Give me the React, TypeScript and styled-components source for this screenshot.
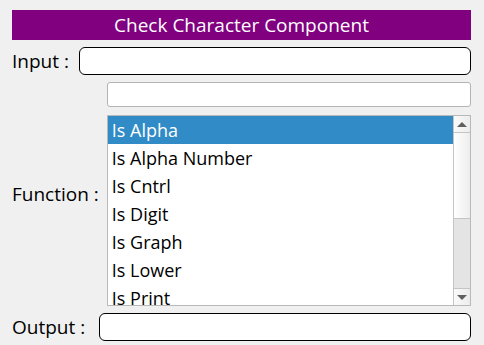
import React from 'react';
import styled, { createGlobalStyle } from 'styled-components';

const GlobalStyle = createGlobalStyle`
  html, body {
    margin: 0;
    background: #f0f0f0;
  }
  body {
    font-family: 'Open Sans', 'Noto Sans', sans-serif;
    color: #000;
  }
`;

const Page = styled.div`
  display: flex;
  flex-direction: column;
  gap: 7px;
  padding: 10px 13px 0 12px;
`;

const TitleBar = styled.div`
  height: 30px;
  background: #800080;
  color: #fff;
  font-size: 19px;
  line-height: 30px;
  text-align: center;
`;

const Row = styled.div<{ $gap: number }>`
  display: flex;
  align-items: center;
  gap: ${(p) => p.$gap}px;
`;

const Label = styled.span`
  font-size: 19px;
  white-space: nowrap;
`;

const Field = styled.input`
  flex: 1;
  height: 28px;
  box-sizing: border-box;
  border: 1px solid #000;
  border-radius: 6px;
  background: #fff;
  outline: none;
`;

const Column = styled.div`
  flex: 1;
  display: flex;
  flex-direction: column;
  gap: 8px;
`;

const Search = styled.input`
  height: 25px;
  box-sizing: border-box;
  border: 1px solid #b4b4b4;
  border-radius: 3px;
  background: #fff;
  outline: none;
`;

const ListBox = styled.div`
  height: 191px;
  box-sizing: border-box;
  border: 1px solid #b9b9b9;
  background: #fff;
  display: flex;
`;

const Items = styled.div`
  flex: 1;
  overflow: hidden;
`;

const Item = styled.div<{ $selected?: boolean }>`
  height: 28px;
  line-height: 29px;
  padding-left: 4px;
  font-size: 18px;
  white-space: nowrap;
  background: ${(p) => (p.$selected ? '#308bc6' : 'transparent')};
  color: ${(p) => (p.$selected ? '#fff' : '#000')};
`;

const ScrollBar = styled.div`
  width: 16px;
  border-left: 1px solid #c4c4c4;
  display: flex;
  flex-direction: column;
`;

const Arrow = styled.div<{ $down?: boolean }>`
  height: 16px;
  display: flex;
  align-items: center;
  justify-content: center;
  background: linear-gradient(to right, #fafafa, #ececec);
  border-top: ${(p) => (p.$down ? '1px solid #c4c4c4' : 'none')};
  border-bottom: ${(p) => (p.$down ? 'none' : '1px solid #c4c4c4')};
  &::after {
    content: '';
    border-left: 5px solid transparent;
    border-right: 5px solid transparent;
    ${(p) =>
      p.$down ? 'border-top: 5px solid #606060;' : 'border-bottom: 5px solid #606060;'}
  }
`;

const Thumb = styled.div`
  height: 86px;
  box-sizing: border-box;
  background: linear-gradient(to right, #ffffff, #ededed);
  border-bottom: 1px solid #c4c4c4;
`;

const Track = styled.div`
  flex: 1;
  background: #e4e4e4;
`;

const functions = [
  'Is Alpha',
  'Is Alpha Number',
  'Is Cntrl',
  'Is Digit',
  'Is Graph',
  'Is Lower',
  'Is Print',
  'Is Punct',
  'Is Space',
  'Is Upper',
];

export default function App() {
  return (
    <>
      <GlobalStyle />
      <Page>
        <TitleBar>Check Character Component</TitleBar>
        <Row $gap={10}>
          <Label>Input :</Label>
          <Field />
        </Row>
        <Row $gap={8}>
          <Label>Function :</Label>
          <Column>
            <Search />
            <ListBox>
              <Items>
                {functions.map((f, i) => (
                  <Item key={f} $selected={i === 0}>
                    {f}
                  </Item>
                ))}
              </Items>
              <ScrollBar>
                <Arrow />
                <Thumb />
                <Track />
                <Arrow $down />
              </ScrollBar>
            </ListBox>
          </Column>
        </Row>
        <Row $gap={14}>
          <Label>Output :</Label>
          <Field />
        </Row>
      </Page>
    </>
  );
}
